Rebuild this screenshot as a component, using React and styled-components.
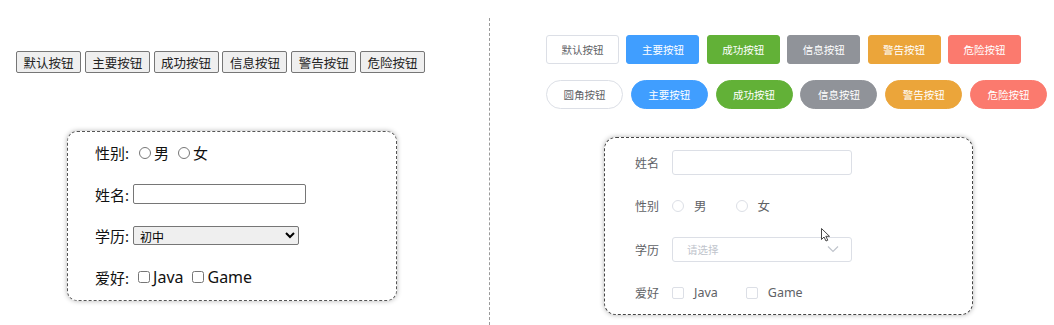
import styled, { createGlobalStyle, css } from "styled-components";

const GlobalStyle = createGlobalStyle`
  body {
    margin: 0;
    background: #fff;
    font-family: "Noto Sans", "Noto Sans CJK SC", sans-serif;
  }
`;

const Page = styled.div`
  display: flex;
  height: 100vh;
  padding-top: 18px;
  box-sizing: border-box;
`;

const LeftPane = styled.div`
  width: 490px;
  flex-shrink: 0;
  box-sizing: border-box;
  border-right: 1px dashed #9a9a9a;
  padding: 33px 0 0 16px;
`;

const NativeBar = styled.div`
  display: flex;
  gap: 3.8px;
`;

const PlainButton = styled.button`
  width: 65px;
  height: 22px;
  padding: 0;
  font-family: "Noto Sans CJK SC", sans-serif;
  font-size: 12.5px;
  color: #222;
  background: #efefef;
  border: 1px solid #767676;
  border-radius: 2px;
`;

const LeftForm = styled.form`
  margin: 58px 0 0 51px;
  width: 330px;
  height: 170px;
  box-sizing: border-box;
  border: 1px dashed #555;
  border-radius: 10px;
  box-shadow: 0 0 5px rgba(0, 0, 0, 0.3);
  padding-left: 27px;
`;

const LeftRow = styled.div`
  height: 41.5px;
  display: flex;
  align-items: center;
  font-size: 15px;
  color: #111;
`;

const LeftLabel = styled.span`
  margin-right: ${(p) => p.$gap || 4}px;
`;

const Choice = styled.label`
  display: inline-flex;
  align-items: center;
  margin-right: 9px;
  font-size: ${(p) => (p.$latin ? 16 : 15)}px;
  input {
    margin: 0 3px 0 0;
    width: 12px;
    height: 12px;
  }
`;

const TextBox = styled.input`
  width: 173px;
  height: 20px;
  box-sizing: border-box;
  border: 1px solid #767676;
  border-radius: 2px;
`;

const Picker = styled.select`
  width: 166px;
  height: 19px;
  box-sizing: border-box;
  font-family: "Noto Sans CJK SC", sans-serif;
  font-size: 12px;
  padding: 0 2px;
  border: 1px solid #767676;
  border-radius: 2px;
`;

const RightPane = styled.div`
  flex: 1;
  position: relative;
  padding: 17px 0 0 56px;
`;

const ButtonRow = styled.div`
  display: flex;
  gap: ${(p) => (p.$round ? 7.8 : 7.4)}px;
  margin-bottom: 16px;
`;

const colors = {
  default: ["#fff", "#dcdfe6", "#606266"],
  primary: ["#409eff", "#409eff", "#fff"],
  success: ["#62b137", "#62b137", "#fff"],
  info: ["#909399", "#909399", "#fff"],
  warning: ["#eba53a", "#eba53a", "#fff"],
  danger: ["#fb7a6e", "#fb7a6e", "#fff"],
};

const ElButton = styled.button`
  width: ${(p) => (p.$round ? 77 : 73)}px;
  height: 29px;
  padding: 0;
  font-family: "Noto Sans CJK SC", sans-serif;
  font-size: 10.5px;
  border-radius: ${(p) => (p.$round ? "15px" : "3px")};
  ${(p) => {
    const [bg, bd, fg] = colors[p.$kind];
    return css`
      background: ${bg};
      border: 1px solid ${bd};
      color: ${fg};
    `;
  }}
`;

const RightForm = styled.div`
  margin: 28px 0 0 58px;
  width: 369px;
  height: 178px;
  box-sizing: border-box;
  border: 1px dashed #444;
  border-radius: 12px;
  box-shadow: 0 0 5px rgba(0, 0, 0, 0.3);
  padding: 3px 0 0 30px;
`;

const ElRow = styled.div`
  height: 43.3px;
  display: flex;
  align-items: center;
  font-size: 12.5px;
  color: #606266;
`;

const ElLabel = styled.span`
  width: 37px;
  font-family: "Noto Sans CJK SC", sans-serif;
  font-size: 12px;
`;

const ElInput = styled.div`
  width: 180px;
  height: 25px;
  box-sizing: border-box;
  border: 1px solid #dcdfe6;
  border-radius: 3px;
  display: flex;
  align-items: center;
  justify-content: space-between;
  padding: 0 12px 0 14px;
`;

const Placeholder = styled.span`
  font-family: "Noto Sans CJK SC", sans-serif;
  font-size: 10.5px;
  color: #c0c4cc;
`;

const ElOption = styled.span`
  display: inline-flex;
  align-items: center;
  margin-right: ${(p) => p.$space}px;
`;

const Mark = styled.span`
  width: 12px;
  height: 12px;
  box-sizing: border-box;
  border: 1px solid #dcdfe6;
  border-radius: ${(p) => (p.$box ? "2px" : "50%")};
  margin-right: 10px;
  background: #fff;
`;

const OptionText = styled.span`
  font-family: "Noto Sans", "Noto Sans CJK SC", sans-serif;
`;

const Cursor = styled.svg`
  position: absolute;
  left: 331px;
  top: 210px;
`;

const plain = ["默认按钮", "主要按钮", "成功按钮", "信息按钮", "警告按钮", "危险按钮"];
const kinds = ["default", "primary", "success", "info", "warning", "danger"];

export default function App() {
  return (
    <>
      <GlobalStyle />
      <Page>
        <LeftPane>
          <NativeBar>
            {plain.map((t) => (
              <PlainButton key={t} type="button">
                {t}
              </PlainButton>
            ))}
          </NativeBar>
          <LeftForm>
            <LeftRow>
              <LeftLabel $gap={10}>性别:</LeftLabel>
              <Choice>
                <input type="radio" name="sex" />男
              </Choice>
              <Choice>
                <input type="radio" name="sex" />女
              </Choice>
            </LeftRow>
            <LeftRow>
              <LeftLabel>姓名:</LeftLabel>
              <TextBox type="text" />
            </LeftRow>
            <LeftRow>
              <LeftLabel>学历:</LeftLabel>
              <Picker defaultValue="初中">
                <option>初中</option>
                <option>高中</option>
                <option>大学</option>
              </Picker>
            </LeftRow>
            <LeftRow>
              <LeftLabel $gap={9}>爱好:</LeftLabel>
              <Choice $latin>
                <input type="checkbox" />Java
              </Choice>
              <Choice $latin>
                <input type="checkbox" />Game
              </Choice>
            </LeftRow>
          </LeftForm>
        </LeftPane>

        <RightPane>
          <ButtonRow>
            {kinds.map((k, i) => (
              <ElButton key={k} $kind={k}>
                {plain[i]}
              </ElButton>
            ))}
          </ButtonRow>
          <ButtonRow $round>
            {kinds.map((k, i) => (
              <ElButton key={k} $kind={k} $round>
                {i === 0 ? "圆角按钮" : plain[i]}
              </ElButton>
            ))}
          </ButtonRow>
          <RightForm>
            <ElRow>
              <ElLabel>姓名</ElLabel>
              <ElInput />
            </ElRow>
            <ElRow>
              <ElLabel>性别</ElLabel>
              <ElOption $space={29}>
                <Mark />
                <OptionText>男</OptionText>
              </ElOption>
              <ElOption>
                <Mark />
                <OptionText>女</OptionText>
              </ElOption>
            </ElRow>
            <ElRow>
              <ElLabel>学历</ElLabel>
              <ElInput>
                <Placeholder>请选择</Placeholder>
                <svg width="12" height="8" viewBox="0 0 12 8">
                  <path d="M1 1.5 L6 6.5 L11 1.5" fill="none" stroke="#c0c4cc" strokeWidth="1.2" />
                </svg>
              </ElInput>
            </ElRow>
            <ElRow>
              <ElLabel>爱好</ElLabel>
              <ElOption $space={28}>
                <Mark $box />
                <OptionText>Java</OptionText>
              </ElOption>
              <ElOption>
                <Mark $box />
                <OptionText>Game</OptionText>
              </ElOption>
            </ElRow>
          </RightForm>
          <Cursor width="10" height="14" viewBox="0 0 10 14">
            <path d="M0.5 0.5 L0.5 11.5 L3 9 L5 13 L6.8 12.2 L4.8 8.3 L8.5 8.3 Z" fill="#fff" stroke="#333" strokeWidth="0.9" strokeLinejoin="round" />
          </Cursor>
        </RightPane>
      </Page>
    </>
  );
}
